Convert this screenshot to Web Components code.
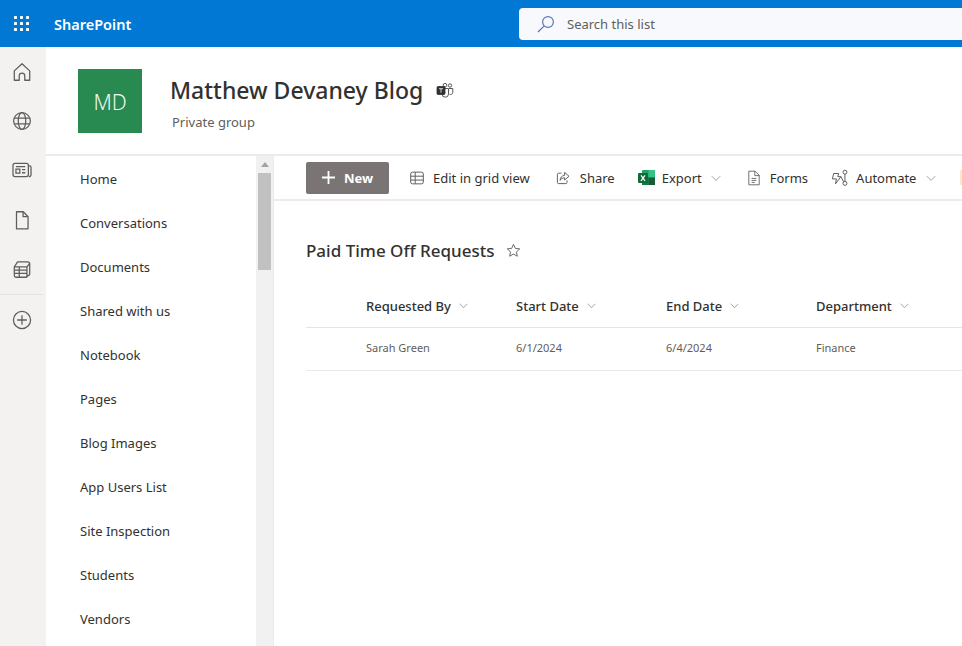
<!DOCTYPE html>
<html>
<head>
<meta charset="utf-8">
<title>Paid Time Off Requests</title>
<style>
	html, body { margin: 0; height: 100%; overflow: hidden; background: #fff; }
	body { font-family: "Noto Sans", "Open Sans", sans-serif; color: #323130; }
</style>
</head>
<body>
<sp-app>
	<sp-suite-bar slot="top"></sp-suite-bar>
	<sp-rail slot="rail"></sp-rail>
	<sp-site-header slot="site" name="Matthew Devaney Blog" sub="Private group" initials="MD"></sp-site-header>
	<sp-nav slot="nav"></sp-nav>
	<sp-command-bar slot="commands"></sp-command-bar>
	<sp-list slot="list" title="Paid Time Off Requests"></sp-list>
</sp-app>

<script>
// shared stroke icons, all drawn on a 20 box
const ICONS = {
	home: '<path d="M3 17.500V9L10 2.500 17 9v8.500h-4.500v-4a2.500 2.500 0 0 0-5 0v4z" stroke-linejoin="round"/>',
	globe: '<circle cx="10" cy="10" r="7.600"/><ellipse cx="10" cy="10" rx="3.400" ry="7.600"/><path d="M3 7.400h14M3 12.600h14"/>',
	news: '<rect x="1.800" y="4" width="14" height="12" rx="1.800"/><path d="M15.800 6.200h1a1.400 1.400 0 0 1 1.400 1.400v6.400a2 2 0 0 1-2 2"/><path d="M4.500 7h8.500M4.500 9.300h3.500v3.600H4.500zM10 9.700h3M10 12.500h3"/>',
	file: '<path d="M5 18V2.500h6.200L15.500 7v11z" stroke-linejoin="round"/><path d="M11 2.500V7h4.500"/>',
	stack: '<path d="M3 8l3-4.500h9a2 2 0 0 1 2 2V14a2 2 0 0 1-2 2l-1 1.500H4.500A1.500 1.500 0 0 1 3 16z" stroke-linejoin="round"/><path d="M3 8h11.500v9.500M3 11h11.500M3 14h11.500M7.500 8v9.500M14.500 8L17 5"/>',
	plusCircle: '<circle cx="10" cy="10" r="7.800"/><path d="M10 5.600v8.800M5.600 10h8.800"/>',
	grid: '<rect x="3" y="3.500" width="14" height="13" rx="2"/><path d="M3 8h14M3 12.300h14M8 3.500v13"/>',
	share: '<path d="M8 4H4.500A1.500 1.500 0 0 0 3 5.500v10A1.500 1.500 0 0 0 4.500 17h9a1.500 1.500 0 0 0 1.500-1.500V13"/><path d="M12 3l5.500 4.800-5.500 4.700V9.800c-2.700 0-4.400 1-5.500 3.200 0-3.800 2-6 5.500-6.300z" stroke-linejoin="round"/>',
	form: '<path d="M3.500 18.500V1.500h8L16.500 6.500v12z" stroke-linejoin="round"/><path d="M11 1.500V7h5.500M7 10.500h6M7 13h6M7 15.500h4"/>',
	auto: '<path d="M3 5h5.500L7.500 8.500h3.500L5 16.500 6 11H1.500z" stroke-linejoin="round"/><circle cx="15.500" cy="3.500" r="2.200"/><circle cx="15.500" cy="16" r="2.200"/><path d="M15.500 5.700v8.100M11 8.500l3 5.800"/>',
	star: '<path d="M10 2.800l2.200 4.700 5.100.6-3.800 3.500 1 5.100L10 14.200l-4.500 2.500 1-5.100L2.700 8.100l5.100-.6z" stroke-linejoin="round"/>',
	chevron: '<path d="M3 7l7 7 7-7"/>'
};

const icon = (name, size, color, width) =>
	`<svg width="${size}" height="${size}" viewBox="0 0 20 20" fill="none" stroke="${color}" stroke-width="${width || 1.200}">${ICONS[name]}</svg>`;

/** Page frame: suite bar on top, rail on the left, the rest in a grid. */
class SpApp extends HTMLElement {
	constructor() {
		super();
		const shadow = this.attachShadow({ mode: 'open' });
		shadow.innerHTML = `
		<style>
			:host { display: block; width: 962px; height: 646px; overflow: hidden; }
			.body { display: grid; grid-template-columns: 46px 228px 1fr; grid-template-rows: 109px 1fr; height: 599px; }
			.rail { grid-row: 1 / 3; }
			.site { grid-column: 2 / 4; }
		</style>
		<slot name="top"></slot>
		<div class="body">
			<div class="rail"><slot name="rail"></slot></div>
			<div class="site"><slot name="site"></slot></div>
			<slot name="nav"></slot>
			<div>
				<slot name="commands"></slot>
				<slot name="list"></slot>
			</div>
		</div>`;
	}
}
customElements.define('sp-app', SpApp);

class SpSuiteBar extends HTMLElement {
	constructor() {
		super();
		const shadow = this.attachShadow({ mode: 'open' });
		let dots = '';
		for (let y = 0; y < 3; y++) {
			for (let x = 0; x < 3; x++) {
				dots += `<rect x="${x * 6.100}" y="${y * 6.100}" width="3" height="3" rx=".6" fill="#fff"/>`;
			}
		}
		shadow.innerHTML = `
		<style>
			:host { display: flex; align-items: center; height: 47px; background: #0078d4; color: #fff; overflow: hidden; }
			.waffle { display: block; flex: none; margin-left: 14px; width: 15px; height: 15px; }
			.brand { flex: none; margin-left: 25px; width: 465px; font-size: 14.500px; font-weight: 600; }
			.search { flex: none; display: flex; align-items: center; width: 480px; height: 32px; box-sizing: border-box; padding-left: 18px; background: #f7f9fc; border-radius: 4px; }
			.search span { margin-left: 12px; font-size: 13px; color: #605e5c; }
			svg.glass { display: block; }
		</style>
		<svg class="waffle" viewBox="0 0 15.200 15.200">${dots}</svg>
		<div class="brand">SharePoint</div>
		<div class="search">
			<svg class="glass" width="18" height="18" viewBox="0 0 18 18" fill="none" stroke="#5a78b4" stroke-width="1.200"><circle cx="11" cy="7" r="5.400"/><path d="M7.200 10.800L1 17"/></svg>
			<span>Search this list</span>
		</div>`;
	}
}
customElements.define('sp-suite-bar', SpSuiteBar);

class SpRail extends HTMLElement {
	constructor() {
		super();
		const shadow = this.attachShadow({ mode: 'open' });
		const btn = (name) => `<div class="btn">${icon(name, 22, '#605e5c', 1.150)}</div>`;
		shadow.innerHTML = `
		<style>
			:host { display: block; height: 100%; background: #f3f2f1; }
			.btn { display: flex; justify-content: center; align-items: center; height: 49.400px; width: 44px; }
			.btn svg { display: block; }
			hr { border: 0; border-top: 1px solid #e5e3e1; margin: 0 3px 0 0; }
		</style>
		<div>
			${btn('home')}${btn('globe')}${btn('news')}${btn('file')}${btn('stack')}
		</div>
		<hr>
		${btn('plusCircle')}`;
	}
}
customElements.define('sp-rail', SpRail);

class SpSiteHeader extends HTMLElement {
	constructor() {
		super();
		const shadow = this.attachShadow({ mode: 'open' });
		shadow.innerHTML = `
		<style>
			:host { display: flex; box-sizing: border-box; height: 109px; padding: 22px 0 0 32px; border-bottom: 2px solid #edebe9; }
			.logo { display: flex; align-items: center; justify-content: center; box-sizing: border-box; padding-top: 1px; width: 64px; height: 64px; background: #288a50; color: #eef7f1; font-size: 21px; font-weight: 300; }
			.text { margin-left: 28px; }
			.name { display: flex; align-items: center; height: 42px; font-size: 23px; font-weight: 500; color: #323130; }
			.name svg { display: block; margin-left: 13px; }
			.sub { margin: 2px 0 0 2px; font-size: 13px; line-height: 18px; color: #605e5c; }
		</style>
		<div class="logo"></div>
		<div class="text">
			<div class="name">
				<span class="title"></span>
				<svg width="18" height="15" viewBox="0 0 18 15" fill="none" stroke="#323130" stroke-width=".8">
					<circle cx="14" cy="2.500" r="1.700"/><circle cx="9" cy="2.200" r="1.800"/>
					<path d="M6 5.500h6.500v5.500a3.200 3.200 0 0 1-6.400 0zM13 5.500h3.800v3.800a2.200 2.200 0 0 1-3.200 2"/>
					<rect x="1" y="3.500" width="8" height="8" rx="1" fill="#323130"/>
					<path d="M3 5.700h4M5 5.700v4" stroke="#fff"/>
				</svg>
			</div>
			<div class="sub"></div>
		</div>`;
		shadow.querySelector('.logo').textContent = this.getAttribute('initials');
		shadow.querySelector('.title').textContent = this.getAttribute('name');
		shadow.querySelector('.sub').textContent = this.getAttribute('sub');
	}
}
customElements.define('sp-site-header', SpSiteHeader);

class SpNav extends HTMLElement {
	constructor() {
		super();
		const shadow = this.attachShadow({ mode: 'open' });
		const items = ['Home', 'Conversations', 'Documents', 'Shared with us', 'Notebook', 'Pages',
			'Blog Images', 'App Users List', 'Site Inspection', 'Students', 'Vendors'];
		shadow.innerHTML = `
		<style>
			:host { display: flex; overflow: hidden; border-right: 1px solid #edebe9; }
			ul { flex: 1; list-style: none; margin: 0; padding: 1px 0 0; }
			li { display: flex; align-items: center; height: 44px; padding-left: 34px; font-size: 13px; color: #323130; }
			.bar { flex: none; width: 17px; box-sizing: border-box; padding: 6px 2px 0; background: #f1f1f1; }
			.arrow { width: 0; height: 0; margin: 0 auto 6px; border: 4px solid transparent; border-top: 0; border-bottom: 5px solid #a3a3a3; }
			.thumb { height: 97px; background: #c1c1c1; }
		</style>
		<ul>${items.map((t) => `<li>${t}</li>`).join('')}</ul>
		<div class="bar"><div class="arrow"></div><div class="thumb"></div></div>`;
	}
}
customElements.define('sp-nav', SpNav);

class SpCommandBar extends HTMLElement {
	constructor() {
		super();
		const shadow = this.attachShadow({ mode: 'open' });
		const chev = icon('chevron', 12, '#8a8886', 1.300);
		shadow.innerHTML = `
		<style>
			:host { display: flex; align-items: center; box-sizing: border-box; height: 45px; padding-left: 32px; border-bottom: 2px solid #edebe9; font-size: 13px; color: #323130; white-space: nowrap; overflow: hidden; }
			svg { display: block; flex: none; }
			.new { flex: none; display: flex; align-items: center; justify-content: center; gap: 9px; width: 83px; height: 32px; background: #7a7574; color: #fff; border-radius: 2px; font-weight: 700; margin-right: 19px; }
			.cmd { display: flex; align-items: center; flex: none; margin-right: 24px; }
			.cmd span { margin-left: 7px; }
			.cmd svg + span + svg { margin-left: 8px; }
			.grid { margin-right: 25px; }
			.share { margin-right: 23px; }
			.share span { margin-left: 9px; }
			.forms { margin-right: 23px; }
			.forms span { margin-left: 8px; }
			.auto { margin-right: 23px; }
			.auto svg + span + svg { margin-left: 9px; }
			.last { width: 4px; height: 15px; background: #fbe9c4; flex: none; }
		</style>
		<div class="new">
			<svg width="13" height="13" viewBox="0 0 13 13" stroke="#fff" stroke-width="1.800"><path d="M6.500 0v13M0 6.500h13"/></svg>
			New
		</div>
		<div class="cmd grid">${icon('grid', 18, '#605e5c', 1.100)}<span>Edit in grid view</span></div>
		<div class="cmd share">${icon('share', 16, '#605e5c', 1.200)}<span>Share</span></div>
		<div class="cmd">
			<svg width="17" height="17" viewBox="0 0 17 17">
				<rect x="4" y="1" width="13" height="15" rx="1" fill="#21a366"/>
				<rect x="10.500" y="1" width="6.500" height="7.500" fill="#33c481"/>
				<rect x="4" y="8.500" width="6.500" height="7.500" fill="#107c41"/>
				<rect x="10.500" y="8.500" width="6.500" height="7.500" fill="#185c37"/>
				<rect x="0" y="4" width="10" height="10" rx="1" fill="#0f6b3a"/>
				<path d="M3 6.300l4 5.500M7 6.300l-4 5.500" stroke="#fff" stroke-width="1.200"/>
			</svg>
			<span>Export</span>${chev}
		</div>
		<div class="cmd forms">${icon('form', 16, '#605e5c', 1.100)}<span>Forms</span></div>
		<div class="cmd auto">${icon('auto', 18, '#605e5c', 1.100)}<span>Automate</span>${chev}</div>
		<div class="last"></div>`;
	}
}
customElements.define('sp-command-bar', SpCommandBar);

class SpList extends HTMLElement {
	constructor() {
		super();
		const shadow = this.attachShadow({ mode: 'open' });
		const cols = ['Requested By', 'Start Date', 'End Date', 'Department'];
		const row = ['Sarah Green', '6/1/2024', '6/4/2024', 'Finance'];
		shadow.innerHTML = `
		<style>
			:host { display: block; padding: 35px 0 0 32px; }
			h1 { display: flex; align-items: center; margin: 0; height: 28px; font-size: 17px; font-weight: 500; color: #323130; }
			h1 svg { display: block; margin-left: 11px; }
			.row { display: grid; grid-template-columns: repeat(4, 150px); padding-left: 60px; white-space: nowrap; }
			.head { margin-top: 20px; height: 44px; align-items: center; box-sizing: border-box; border-bottom: 1px solid #e6e4e2; font-size: 13px; font-weight: 500; }
			.head div { display: flex; align-items: center; gap: 7px; }
			.head svg { display: block; }
			.cells { height: 43px; padding-bottom: 3px; align-items: center; box-sizing: border-box; border-bottom: 1px solid #edebe9; font-size: 11px; color: #605e5c; }
		</style>
		<h1><span></span>${icon('star', 17, '#605e5c', 1.100)}</h1>
		<div class="row head">${cols.map((c) => `<div>${c}${icon('chevron', 11, '#8a8886', 1.400)}</div>`).join('')}</div>
		<div class="row cells">${row.map((c) => `<div>${c}</div>`).join('')}</div>`;
		shadow.querySelector('h1 span').textContent = this.getAttribute('title');
	}
}
customElements.define('sp-list', SpList);
</script>
</body>
</html>
